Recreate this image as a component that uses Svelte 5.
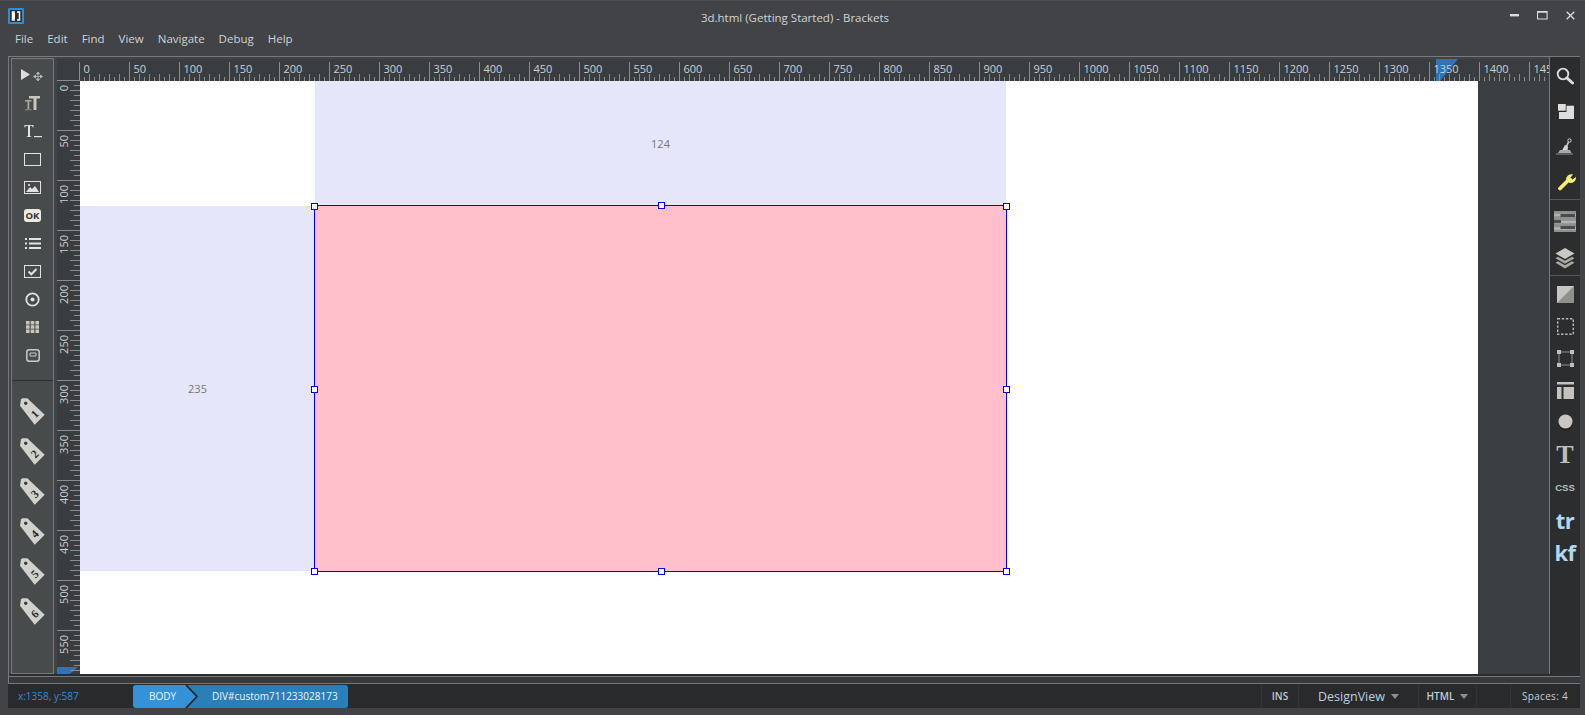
<script>
  const menus = ['File', 'Edit', 'Find', 'View', 'Navigate', 'Debug', 'Help'];

  // rulers: a tick every 5px, a taller one every 10, labelled every 50
  const hTicks = [];
  for (let i = 0; i <= 1470; i += 5) hTicks.push(i);
  const vTicks = [];
  for (let i = 0; i <= 590; i += 5) vTicks.push(i);

  const tags = [1, 2, 3, 4, 5, 6];
</script>

<div class="window">
  <header class="titlebar">
    <svg class="logo" width="16" height="16" viewBox="0 0 16 16">
      <rect width="16" height="16" rx="1.5" fill="#2f8fd6" />
      <rect x="2" y="2" width="12" height="12" fill="#2b2d30" />
      <path d="M7 4H4.500v8H7M9 4h2.500v8H9" fill="none" stroke="#fff" stroke-width="1.600" />
      <rect x="5" y="5" width="2" height="6" fill="#fff" />
    </svg>
    <div class="title">3d.html (Getting Started) - Brackets</div>
    <div class="controls">
      <svg width="9" height="3" viewBox="0 0 9 3"><rect width="9" height="2.400" fill="#dcdcdc" /></svg>
      <svg width="11" height="9" viewBox="0 0 11 9"><path d="M.5.5h9.600v7.500H.5zM.5 1.200h9.600" fill="none" stroke="#dcdcdc" stroke-width="1.100" /></svg>
      <svg width="9" height="9" viewBox="0 0 9 9"><path d="M.7.7l7.600 7.600M8.300.7L.7 8.300" stroke="#dcdcdc" stroke-width="1.300" /></svg>
    </div>
  </header>

  <nav class="menubar">
    {#each menus as m}
      <span>{m}</span>
    {/each}
  </nav>

  <div class="workspace">
    <div class="main">
      <aside class="toolbar">
        <div class="tools">
          <div class="tool">
            <svg width="24" height="14" viewBox="0 0 24 14">
              <path d="M0 1l9 5.500L0 12z" fill="#ddd" />
              <path d="M17 5v7M13.500 8.500h7M17 4l-1.500 2h3zM17 13l-1.500-2h3zM12.500 8.500l2-1.500v3zM21.500 8.500l-2-1.500v3z" stroke="#bbb" stroke-width=".8" fill="#bbb" />
            </svg>
          </div>
          <div class="tool">
            <svg width="16" height="16" viewBox="0 0 16 16">
              <path d="M4 1h11v2.400h-3.500V15h-3V3.400H4z" fill="#c9c7bd" />
              <path d="M0 5h6.500v1.500H4.300V14H2.500V6.500H0z" fill="#a9a79f" />
              <path d="M0 14.200h6.500v1H0z" fill="#8e8c86" />
            </svg>
          </div>
          <div class="tool">
            <svg width="18" height="14" viewBox="0 0 18 14">
              <path d="M.5 1h9v2.400H8.800C8.500 2 8 1.700 6 1.700v10c0 .6.400.7 1.400.8v.5H2.600v-.5c1-.1 1.400-.2 1.400-.8v-10c-2 0-2.500.3-2.800 1.700H.5z" fill="#e2e2e2" />
              <rect x="10" y="12" width="8" height="1.200" fill="#e2e2e2" />
            </svg>
          </div>
          <div class="tool"><svg width="17" height="13" viewBox="0 0 17 13"><rect x=".5" y=".5" width="16" height="12" fill="none" stroke="#e2e2e2" /></svg></div>
          <div class="tool">
            <svg width="17" height="13" viewBox="0 0 17 13">
              <rect x=".5" y=".5" width="16" height="12" fill="none" stroke="#e2e2e2" />
              <path d="M2 11l4-5 2 2 3-3 4 6z" fill="#e2e2e2" />
              <circle cx="5" cy="4" r="1.100" fill="#e2e2e2" />
            </svg>
          </div>
          <div class="tool">
            <div class="ok">OK</div>
          </div>
          <div class="tool">
            <svg width="16" height="11" viewBox="0 0 16 11">
              <path d="M0 0h2v2H0zM0 4.500h2v2H0zM0 9h2v2H0zM4 0h12v2H4zM4 4.500h12v2H4zM4 9h12v2H4z" fill="#e2e2e2" />
            </svg>
          </div>
          <div class="tool">
            <svg width="17" height="13" viewBox="0 0 17 13">
              <rect x=".5" y=".5" width="16" height="12" fill="none" stroke="#e2e2e2" />
              <path d="M4.500 6.500l2.800 2.800 5.200-5.300" fill="none" stroke="#e2e2e2" stroke-width="2" />
            </svg>
          </div>
          <div class="tool">
            <svg width="15" height="15" viewBox="0 0 15 15">
              <circle cx="7.500" cy="7.500" r="6.200" fill="none" stroke="#e2e2e2" stroke-width="1.800" />
              <circle cx="7.500" cy="7.500" r="2" fill="#e2e2e2" />
            </svg>
          </div>
          <div class="tool">
            <svg width="13" height="12" viewBox="0 0 13 12">
              <path d="M0 0h3.600v3.600H0zM4.700 0h3.600v3.600H4.700zM9.400 0H13v3.600H9.400zM0 4.200h3.600v3.600H0zM4.700 4.200h3.600v3.600H4.700zM9.400 4.200H13v3.600H9.400zM0 8.400h3.600V12H0zM4.700 8.400h3.600V12H4.700zM9.400 8.400H13V12H9.400z" fill="#c8c6ba" />
            </svg>
          </div>
          <div class="tool">
            <svg width="14" height="13" viewBox="0 0 14 13">
              <rect x=".8" y=".8" width="12.400" height="11.400" rx="2.500" fill="none" stroke="#c8ccc8" stroke-width="1.500" />
              <path d="M4 4h6v3H4z" fill="none" stroke="#c8ccc8" />
            </svg>
          </div>
        </div>
        <div class="tags">
          {#each tags as t}
            <div class="tag">
              <svg width="30" height="30" viewBox="0 0 30 30">
                <path d="M2 9.700L3 3.500 4.300 2.300H9.300L26.700 18.700 16.700 28.700z" fill="#d2d2cd" />
                <circle cx="7.700" cy="7.300" r="1.700" fill="#3c3f40" />
                <text x="16.700" y="22" text-anchor="middle" transform="rotate(-45 16.700 18)" class="tagnum">{t}</text>
              </svg>
            </div>
          {/each}
        </div>
      </aside>

      <div class="board">
        <div class="hruler">
          <div class="corner"></div>
          <svg class="hsvg" width="1470" height="22" viewBox="0 0 1470 22">
            <path d="M1357 0h22l-18 22h-4z" fill="#2f74b5" />
            {#each hTicks as x}
              {#if x % 50 === 0}
                <path d="M{x + 0.5} 3V22" class="major" />
                <text x={x + 4.5} y="14" class="rl">{x}</text>
              {:else}
                <path d="M{x + 0.5} {x % 10 === 0 ? 15 : 18}V22" class="minor" />
              {/if}
            {/each}
          </svg>
        </div>
        <div class="lower">
          <div class="vruler">
            <svg width="23" height="593" viewBox="0 0 23 593">
              <path d="M0 586h21l-8 7H0z" fill="#2f74b5" />
              {#each vTicks as y}
                {#if y % 50 === 0}
                  <path d="M0 {y - 0.5}H23" class="major" />
                  <text transform="translate(11 {y + 4}) rotate(-90)" text-anchor="end" class="rl">{y}</text>
                {:else}
                  <path d="M{y % 10 === 0 ? 13 : 17} {y - 0.5}H23" class="minor" />
                {/if}
              {/each}
            </svg>
          </div>
          <div class="stage">
            <div class="canvas">
              <div class="guide top">124</div>
              <div class="guide left">235</div>
              <div class="box">
                <i class="h tl"></i><i class="h tc"></i><i class="h tr"></i>
                <i class="h ml"></i><i class="h mr"></i>
                <i class="h bl"></i><i class="h bc"></i><i class="h br"></i>
              </div>
            </div>
          </div>
        </div>
      </div>

      <aside class="panel">
        <div class="group first">
          <div class="pi">
            <svg width="18" height="18" viewBox="0 0 18 18">
              <circle cx="7" cy="7" r="5.300" fill="none" stroke="#dedede" stroke-width="1.800" />
              <path d="M11 11l5.500 5" stroke="#dedede" stroke-width="3" stroke-linecap="round" />
            </svg>
          </div>
          <div class="pi">
            <svg class="nudge" width="16" height="15" viewBox="0 0 16 15">
              <rect width="7.700" height="6.700" fill="#dedede" />
              <path d="M8.500 1.700H16V15H1V8h7.500z" fill="#dedede" />
            </svg>
          </div>
          <div class="pi">
            <svg width="18" height="17" viewBox="0 0 18 17">
              <circle cx="13.500" cy="2.500" r="1.700" fill="none" stroke="#cfcfcf" />
              <path d="M12.500 4L10.500 8.500" stroke="#cfcfcf" stroke-width="1.600" />
              <path d="M9 7l3 1.500-.5 4H6z" fill="#d6d6d6" />
              <path d="M4 12h10l1.500 3H2z" fill="#a8a8a8" />
              <path d="M0 16h17" stroke="#8e8e8e" />
            </svg>
          </div>
          <div class="pi">
            <svg class="nudge" width="19" height="18" viewBox="0 0 19 18">
              <path d="M3 15.500L11 7.500" stroke="#f6ee6e" stroke-width="3.800" stroke-linecap="round" />
              <path d="M9 6C9.500 2.500 13 .5 16 1.500L13.500 4.500 15.500 6.500 19 4C19.500 7.500 16.500 10.500 12.500 10z" fill="#f6ee6e" />
            </svg>
          </div>
        </div>
        <div class="group second">
          <div class="pi tall">
            <svg width="22" height="21" viewBox="0 0 22 21">
              <rect width="22" height="21" fill="#8e8f8f" />
              <path d="M0 4h22M0 11h22M0 17.500h22" stroke="#d0d0d0" stroke-width="2.600" opacity=".55" />
              <path d="M6.500 3h14.500v3H6.500zM6.500 15h14.500v3H6.500zM0 9h7v3H0z" fill="#4a4b4c" />
            </svg>
          </div>
          <div class="pi tall">
            <svg width="20" height="21" viewBox="0 0 20 21">
              <path d="M10 0l9.500 5.500L10 11 .5 5.500z" fill="#c9c9c4" />
              <path d="M3 8.700L.5 10.200 10 15.700l9.500-5.500L17 8.700l-7 4z" fill="#a9a9a4" />
              <path d="M3 13.300L.5 14.800 10 20.500l9.500-5.700L17 13.300l-7 4z" fill="#a9a9a4" />
            </svg>
          </div>
        </div>
        <div class="group third">
          <div class="pn">
            <svg width="17" height="17" viewBox="0 0 17 17">
              <rect width="17" height="17" fill="#c6c5bf" />
              <path d="M17 0v17H0z" fill="#8f908e" />
            </svg>
          </div>
          <div class="pn">
            <svg width="17" height="17" viewBox="0 0 17 17">
              <rect x=".7" y=".7" width="15.600" height="15.600" fill="none" stroke="#b9b9b4" stroke-width="1.400" stroke-dasharray="2.400 1.700" />
            </svg>
          </div>
          <div class="pn">
            <svg width="17" height="17" viewBox="0 0 17 17">
              <rect x="2" y="2" width="13" height="13" fill="none" stroke="#6e7478" stroke-width="1.400" />
              <path d="M0 0h4v4H0zM13 0h4v4h-4zM0 13h4v4H0zM13 13h4v4h-4z" fill="#c0c0ba" />
            </svg>
          </div>
          <div class="pn">
            <svg width="17" height="17" viewBox="0 0 17 17">
              <path d="M0 0h17v2.400H0zM0 5h4.500v12H0zM6.500 5H17v12H6.500z" fill="#c4c3bd" />
            </svg>
          </div>
          <div class="pn">
            <svg width="15" height="18" viewBox="0 0 15 18">
              <circle cx="7.500" cy="9.800" r="7" fill="#232325" />
              <circle cx="7.500" cy="7.500" r="7" fill="#c9c7c1" />
            </svg>
          </div>
          <div class="pn"><span class="bigt">T</span></div>
          <div class="pn"><span class="css">CSS</span></div>
          <div class="pn"><span class="code">tr</span></div>
          <div class="pn"><span class="code kf">kf</span></div>
        </div>
      </aside>
    </div>
    <div class="bottombar"></div>
  </div>

  <footer class="status">
    <div class="coords">x:1358, y:587</div>
    <div class="crumbs">
      <span class="crumb body">BODY</span>
      <svg class="chev" width="13" height="23" viewBox="0 0 13 23">
        <path d="M0 0l11 11.500L0 23z" fill="#3492d8" />
        <path d="M1 0l11 11.500L1 23" fill="none" stroke="#25272a" stroke-width="1.800" />
      </svg>
      <span class="crumb div">DIV#custom711233028173</span>
    </div>
    <div class="right">
      <span class="cell ins">INS</span>
      <span class="cell view">DesignView<i class="caret"></i></span>
      <span class="cell lang">HTML<i class="caret"></i></span>
      <span class="cell blank"></span>
      <span class="cell spaces">Spaces: 4</span>
    </div>
  </footer>
  <div class="edge"></div>
  <div class="strip"></div>
</div>

<style>
  :global(body) {
    margin: 0;
    background: #fff;
  }

  .window {
    width: 1585px;
    height: 718px;
    overflow: hidden;
    display: flex;
    flex-direction: column;
    background: #414347;
    font-family: "Open Sans", "Liberation Sans", sans-serif;
    color: #d4d6d8;
  }

  .titlebar {
    height: 32px;
    flex: none;
    display: flex;
    align-items: center;
    box-sizing: border-box;
    padding: 0 10px 0 8px;
    border-top: 1px solid #4b4d51;
  }

  .logo {
    margin-top: -1px;
  }

  .title {
    flex: 1;
    text-align: center;
    font-size: 11.500px;
    color: #d2d4d6;
    margin-top: 2px;
    padding-left: 56px;
  }

  .controls {
    display: flex;
    align-items: center;
    gap: 18px;
    margin-top: -3px;
  }

  .menubar {
    height: 23px;
    flex: none;
    display: flex;
    align-items: center;
    gap: 14px;
    box-sizing: border-box;
    padding: 0 0 10px 15px;
    font-size: 11.500px;
    color: #cfd3d6;
  }

  .workspace {
    margin: 1px 5px 0 8px;
    flex: none;
    border-top: 1px solid #77797a;
    border-left: 1px solid #77797a;
  }

  .main {
    display: flex;
    height: 619px;
    box-sizing: border-box;
    border-bottom: 2px solid #2c2d2f;
  }

  .toolbar {
    width: 43px;
    flex: none;
    margin: 1px 0 0 2px;
    box-sizing: border-box;
    border: 1px solid #77797a;
    background: #484b4b;
  }

  .tools {
    height: 322px;
    padding-top: 2px;
    box-sizing: border-box;
    border-bottom: 1px solid #2f3133;
  }

  .tool {
    height: 28px;
    display: flex;
    align-items: center;
    justify-content: center;
  }

  .ok {
    width: 17px;
    height: 13px;
    border-radius: 3px;
    background: #eceae2;
    color: #333;
    font: 700 9.500px/13px "Open Sans", sans-serif;
    text-align: center;
  }

  .tags {
    padding-top: 10px;
  }

  .tag {
    height: 40px;
    display: flex;
    align-items: center;
    justify-content: center;
  }

  .tagnum {
    font: 700 11.500px "Liberation Serif", serif;
    fill: #2a2a2a;
  }

  .board {
    flex: 1;
    min-width: 0;
    margin-left: 3px;
    display: flex;
    flex-direction: column;
    overflow: hidden;
  }

  .hruler {
    display: flex;
    height: 22px;
    flex: none;
    margin-top: 2px;
    background: #3a3d40;
    overflow: hidden;
  }

  .corner {
    width: 22px;
    flex: none;
    box-sizing: border-box;
    border-bottom: 1px solid #8a8c8e;
  }

  .hsvg {
    flex: none;
  }

  .major,
  .minor {
    stroke: #8a8c8e;
    fill: none;
  }

  .rl {
    font: 11px "Open Sans", sans-serif;
    fill: #ccd0d4;
  }

  .lower {
    flex: 1;
    display: flex;
    min-height: 0;
  }

  .vruler {
    width: 23px;
    flex: none;
    background: #3a3d40;
  }

  .vruler svg {
    display: block;
  }

  .stage {
    flex: 1;
    min-width: 0;
    background: #3c3f41;
  }

  .canvas {
    position: relative;
    width: 1398px;
    height: 593px;
    background: #fff;
  }

  .guide {
    position: absolute;
    display: flex;
    align-items: center;
    justify-content: center;
    background: #e6e6fa;
    color: #777;
    font: 11px "Open Sans", sans-serif;
  }

  .guide.top {
    left: 235px;
    top: 0;
    width: 691px;
    height: 124px;
  }

  .guide.left {
    left: 0;
    top: 125px;
    width: 235px;
    height: 365px;
  }

  .box {
    position: absolute;
    left: 234px;
    top: 124px;
    width: 693px;
    height: 367px;
    box-sizing: border-box;
    background: #ffc0cb;
    border: 1px solid #0000ee;
  }

  .h {
    position: absolute;
    width: 7px;
    height: 7px;
    box-sizing: border-box;
    background: #fff;
    border: 1px solid #0000ee;
  }

  .tl { left: -4px; top: -3px; }
  .tc { left: 343px; top: -4px; }
  .tr { right: -4px; top: -3px; }
  .ml { left: -4px; top: 180px; }
  .mr { right: -4px; top: 180px; }
  .bl { left: -4px; bottom: -4px; }
  .bc { left: 343px; bottom: -4px; }
  .br { right: -4px; bottom: -4px; }

  .panel {
    width: 30px;
    flex: none;
    background: #2c2d2f;
    border-left: 1px solid #77797a;
    display: flex;
    flex-direction: column;
  }

  .group {
    border-bottom: 1px solid #555759;
    box-sizing: border-box;
  }

  .first {
    height: 143px;
    padding-top: 1px;
  }

  .second {
    height: 76px;
    padding-top: 3px;
  }

  .third {
    padding-top: 2px;
    border-bottom: none;
  }

  .pi,
  .pn {
    display: flex;
    align-items: center;
    justify-content: center;
  }

  .nudge {
    margin-left: 2px;
  }

  .pi {
    height: 35.500px;
  }

  .pi.tall {
    height: 37px;
  }

  .pn {
    height: 32.250px;
  }

  .bigt {
    font: 700 26px/1 "Liberation Serif", serif;
    color: #c0bfb8;
  }

  .css {
    font: 700 9.500px "Liberation Sans", sans-serif;
    color: #bdbdb8;
  }

  .code {
    font: 700 22px/1 "Open Sans", sans-serif;
    color: #b4d6ee;
    letter-spacing: -0.500px;
  }

  .bottombar {
    height: 8px;
    box-sizing: border-box;
    border-top: 1px solid #77797a;
    border-bottom: 1px solid #77797a;
    background: #38393c;
  }

  .status {
    height: 24px;
    flex: none;
    margin: 0 5px 0 8px;
    display: flex;
    align-items: center;
    background: #292a2c;
    font-size: 11px;
  }

  .coords {
    width: 125px;
    padding-left: 10px;
    box-sizing: border-box;
    color: #3a88d8;
    font-size: 10px;
  }

  .crumbs {
    display: flex;
    height: 23px;
    color: #eef4f8;
    font-size: 10px;
    font-weight: 500;
  }

  .crumb {
    display: flex;
    align-items: center;
  }

  .crumb.body {
    width: 52px;
    padding-left: 16px;
    box-sizing: border-box;
    background: #3492d8;
    border-radius: 3px 0 0 3px;
  }

  .chev {
    background: #2a7fb8;
  }

  .crumb.div {
    width: 150px;
    padding-left: 14px;
    box-sizing: border-box;
    background: #2a7fb8;
    border-radius: 0 3px 3px 0;
  }

  .right {
    margin-left: auto;
    display: flex;
    height: 100%;
    color: #c9ccd0;
  }

  .cell {
    display: flex;
    align-items: center;
    justify-content: center;
    box-sizing: border-box;
    border-left: 1px solid #333437;
    font-weight: 600;
    font-size: 10px;
  }

  .ins {
    width: 37px;
  }

  .view {
    width: 120px;
    font-size: 12.500px;
    font-weight: 400;
    color: #bcd0e0;
  }

  .lang {
    width: 58px;
  }

  .blank {
    width: 34px;
  }

  .spaces {
    width: 70px;
    justify-content: flex-start;
    padding-left: 11px;
    letter-spacing: .3px;
    font-weight: 400;
  }

  .caret {
    width: 0;
    height: 0;
    margin-left: 6px;
    border-left: 4px solid transparent;
    border-right: 4px solid transparent;
    border-top: 5px solid #8e9093;
  }

  .edge {
    height: 7px;
    flex: none;
  }

  .strip {
    height: 3px;
    flex: none;
    background: #fff;
  }
</style>
